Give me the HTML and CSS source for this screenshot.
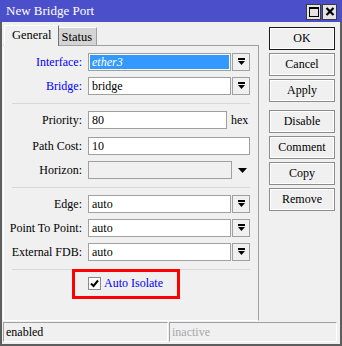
FILE: index.html
```html
<!DOCTYPE html>
<html>
<head>
<meta charset="utf-8">
<link rel="stylesheet" href="styles.css">
</head>
<body>
<div class="win">
  <div class="titlebar">
    <span class="title">New Bridge Port</span>
    <div class="tbtns">
      <span class="tbtn"><svg width="12" height="13" viewBox="0 0 12 13"><rect x="1.5" y="2.5" width="9" height="9" fill="none" stroke="#000" stroke-width="1"/><rect x="1" y="2" width="10" height="2" fill="#000"/></svg></span>
      <span class="tbtn"><svg width="12" height="13" viewBox="0 0 12 13"><path d="M2.5 3 L9.5 10 M9.5 3 L2.5 10" stroke="#000" stroke-width="2.2"/></svg></span>
    </div>
  </div>
  <div class="frame">
    <div class="main">
      <div class="left">
        <div class="tabs">
          <div class="tab active">General</div>
          <div class="tab">Status</div>
        </div>
        <div class="panel">
          <div class="row">
            <span class="lbl blue">Interface:</span>
            <div class="field sel">ether3</div>
            <div class="dd"><svg width="7" height="8" viewBox="0 0 7 8"><rect x="0" y="0" width="7" height="2"/><path d="M0 3h7L3.5 7z"/></svg></div>
          </div>
          <div class="row">
            <span class="lbl blue">Bridge:</span>
            <div class="field">bridge</div>
            <div class="dd"><svg width="7" height="8" viewBox="0 0 7 8"><rect x="0" y="0" width="7" height="2"/><path d="M0 3h7L3.5 7z"/></svg></div>
          </div>
          <div class="sep"></div>
          <div class="row prio">
            <span class="lbl">Priority:</span>
            <div class="field short">80</div>
            <span class="unit">hex</span>
          </div>
          <div class="row">
            <span class="lbl">Path Cost:</span>
            <div class="field wide">10</div>
          </div>
          <div class="row">
            <span class="lbl">Horizon:</span>
            <div class="field dis"></div>
            <svg class="harrow" width="9" height="5" viewBox="0 0 9 5"><path d="M0 0h9L4.5 5z"/></svg>
          </div>
          <div class="sep"></div>
          <div class="row">
            <span class="lbl">Edge:</span>
            <div class="field">auto</div>
            <div class="dd"><svg width="7" height="8" viewBox="0 0 7 8"><rect x="0" y="0" width="7" height="2"/><path d="M0 3h7L3.5 7z"/></svg></div>
          </div>
          <div class="row">
            <span class="lbl">Point To Point:</span>
            <div class="field">auto</div>
            <div class="dd"><svg width="7" height="8" viewBox="0 0 7 8"><rect x="0" y="0" width="7" height="2"/><path d="M0 3h7L3.5 7z"/></svg></div>
          </div>
          <div class="row">
            <span class="lbl">External FDB:</span>
            <div class="field">auto</div>
            <div class="dd"><svg width="7" height="8" viewBox="0 0 7 8"><rect x="0" y="0" width="7" height="2"/><path d="M0 3h7L3.5 7z"/></svg></div>
          </div>
          <div class="sep"></div>
          <div class="chkrow">
            <svg class="chk" width="13" height="13" viewBox="0 0 13 13"><rect x="0.5" y="0.5" width="12" height="12" fill="#fff" stroke="#8a8a8a"/><path d="M3 6.5 L5.5 9 L10 3.5" fill="none" stroke="#000" stroke-width="2"/></svg>
            <span class="blue">Auto Isolate</span>
            <div class="highlight"></div>
          </div>
        </div>
      </div>
      <div class="btns">
        <div class="btn def">OK</div>
        <div class="btn">Cancel</div>
        <div class="btn">Apply</div>
        <div class="btn grp">Disable</div>
        <div class="btn">Comment</div>
        <div class="btn">Copy</div>
        <div class="btn">Remove</div>
      </div>
    </div>
    <div class="status">
      <div class="cell c1">enabled</div>
      <div class="cell c2">inactive</div>
    </div>
  </div>
</div>
</body>
</html>
```
FILE: styles.css
```css
html, body {
  margin: 0;
  padding: 0;
  background: #f0f0f0;
}
body {
  font-family: "Liberation Serif", "DejaVu Serif", serif;
  font-size: 12px;
  color: #000;
}
.win {
  width: 342px;
  height: 346px;
  display: flex;
  flex-direction: column;
}
.titlebar {
  height: 22px;
  flex: none;
  background: #4b4fc9;
  display: flex;
  align-items: center;
  padding-left: 6px;
  color: #fff;
}
.title {
  flex: 1;
  font-size: 13px;
}
.tbtns {
  display: flex;
  gap: 1px;
  margin-right: 5px;
  margin-top: 1px;
}
.tbtn {
  width: 15px;
  height: 16px;
  box-sizing: border-box;
  background: #e4e4e4;
  border: 1px solid #3a3a3a;
  display: flex;
  align-items: center;
  justify-content: center;
}
.frame {
  flex: 1;
  display: flex;
  flex-direction: column;
  border: 2px solid #5e5e5e;
  border-top: 0;
}
.main {
  flex: 1;
  display: flex;
  min-height: 0;
}
.left {
  margin-left: 1px;
  width: 256px;
  display: flex;
  flex-direction: column;
  margin-bottom: 1px;
}
.tabs {
  height: 23px;
  flex: none;
  display: flex;
  align-items: flex-end;
  padding-left: 1px;
  box-sizing: border-box;
}
.tab {
  height: 18px;
  box-sizing: border-box;
  padding: 0 4px 0 3px;
  line-height: 18px;
  background: #d4d4d4;
  border-top: 1px solid #fff;
  border-right: 1px solid #a0a0a0;
  font-size: 12.5px;
}
.tab.active {
  height: 21px;
  margin-bottom: -1px;
  position: relative;
  z-index: 1;
  background: #f0f0f0;
  border-left: 1px solid #fff;
  border-right: 1px solid #707070;
  line-height: 19px;
  padding: 0 6px 0 7px;
}
.panel {
  flex: 1;
  border: 1px solid;
  border-color: #a0a0a0 #a0a0a0 #fff #fff;
  padding-top: 7px;
}
.row {
  display: flex;
  align-items: center;
  height: 18px;
  margin-bottom: 6px;
}
.row.prio {
  margin-bottom: 8px;
}
.lbl {
  width: 78px;
  margin-right: 6px;
  text-align: right;
  flex: none;
  white-space: nowrap;
}
.blue {
  color: #0000ff;
}
.field {
  width: 143px;
  height: 18px;
  box-sizing: border-box;
  border: 1px solid #a0a0a0;
  background: #fff;
  padding-left: 3px;
  line-height: 16px;
  flex: none;
}
.field.sel {
  background: #3399ff;
  color: #fff;
  font-style: italic;
  box-shadow: inset 0 0 0 1px #fff;
}
.field.short {
  width: 139px;
}
.field.wide {
  width: 162px;
}
.field.dis {
  width: 144px;
  background: #f0f0f0;
}
.unit {
  margin-left: 4px;
}
.harrow {
  margin-left: 6px;
}
.dd {
  width: 18px;
  height: 18px;
  margin-left: 1px;
  box-sizing: border-box;
  border: 1px solid #a0a0a0;
  background: #f0f0f0;
  display: flex;
  align-items: center;
  justify-content: center;
}
.sep {
  height: 1px;
  background: #d8d8d8;
  margin: 8px 0 7px 8px;
  width: 238px;
}
.chkrow {
  position: relative;
  display: flex;
  align-items: center;
  height: 14px;
  margin-top: -1px;
  padding-left: 84px;
}
.chk {
  margin-right: 3px;
}
.highlight {
  position: absolute;
  left: 68px;
  top: -7px;
  width: 108px;
  height: 30px;
  box-sizing: border-box;
  border: 3px solid #ff0000;
}
.btns {
  margin-left: 10px;
  padding-top: 5px;
  width: 66px;
  display: flex;
  flex-direction: column;
  gap: 3px;
}
.btn {
  height: 23px;
  box-sizing: border-box;
  border: 1px solid #8c8c8c;
  box-shadow: inset 0 0 0 1px #fff;
  background: #f0f0f0;
  text-align: center;
  line-height: 21px;
}
.btn.def {
  border-color: #1a1a1a;
}
.btn.grp {
  margin-top: 5px;
}
.status {
  display: flex;
  height: 20px;
  flex: none;
  margin: 0 0 2px 1px;
  gap: 1px;
}
.cell {
  box-sizing: border-box;
  border: 1px solid;
  border-color: #a0a0a0 #fff #fff #a0a0a0;
  padding-left: 2px;
  line-height: 18px;
}
.c1 {
  width: 165px;
}
.c2 {
  width: 168px;
  color: #a8a8a8;
}
```
